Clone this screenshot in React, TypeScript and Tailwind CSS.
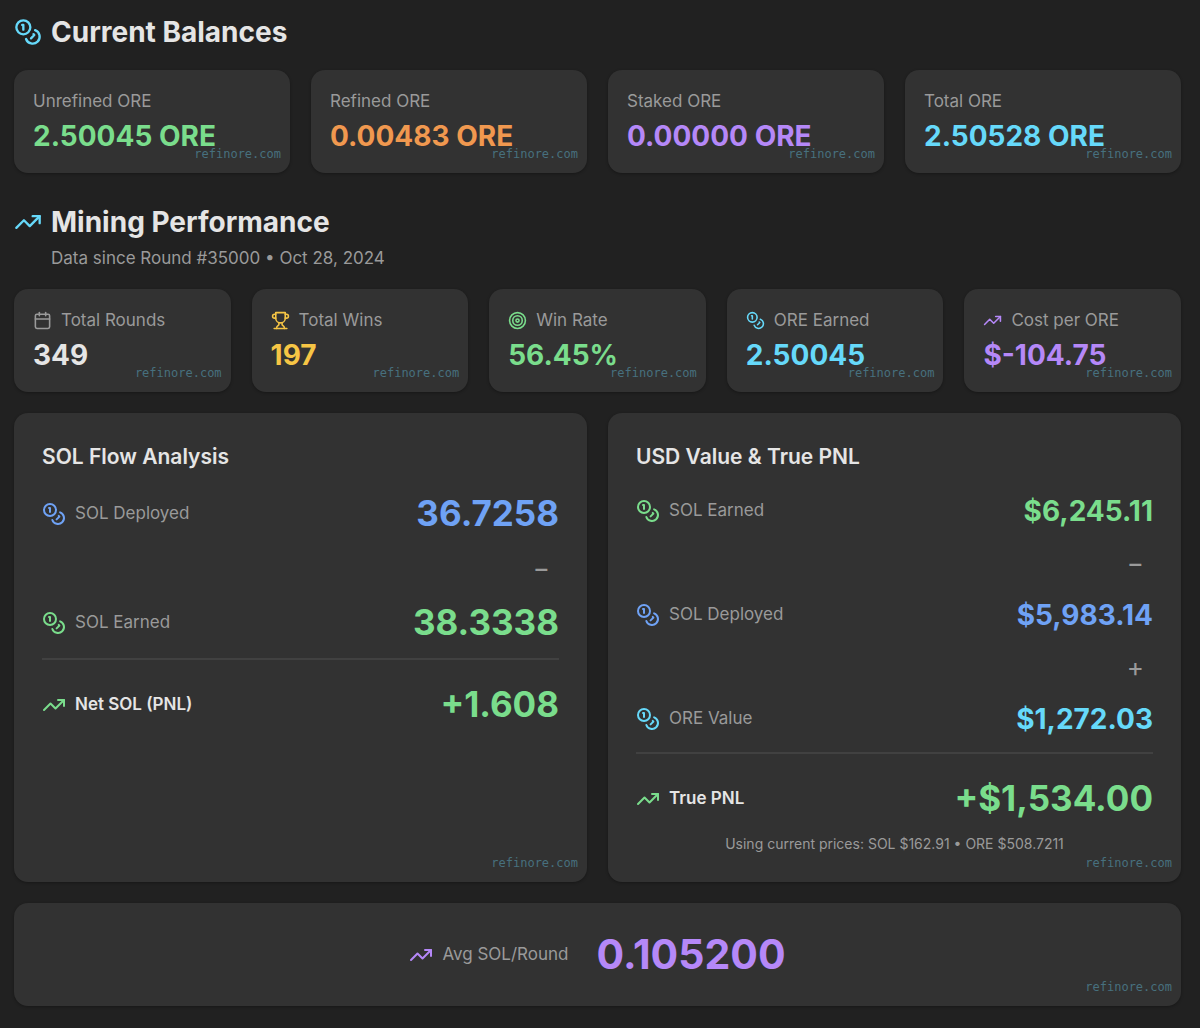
import { Calendar, Coins, Target, TrendingUp } from 'lucide-react'
import type { ComponentType, ReactNode } from 'react'

type Icon = ComponentType<{ className?: string }>

function Trophy({ className }: { className?: string }) {
  return (
    <svg viewBox="0 0 24 24" fill="none" stroke="currentColor" strokeWidth="2" strokeLinecap="round" strokeLinejoin="round" className={className}>
      <path d="M6 9H4.5a2.5 2.5 0 0 1 0-5H6" />
      <path d="M18 9h1.5a2.5 2.5 0 0 0 0-5H18" />
      <path d="M4 22h16" />
      <path d="M10 14.66V17c0 .55-.47.98-.97 1.21C7.85 18.75 7 20.24 7 22" />
      <path d="M14 14.66V17c0 .55.47.98.97 1.21C16.15 18.75 17 20.24 17 22" />
      <path d="M18 2H6v7a6 6 0 0 0 12 0V2Z" />
    </svg>
  )
}

const balances = [
  { label: 'Unrefined ORE', value: '2.50045 ORE', color: 'text-[#7add8c]' },
  { label: 'Refined ORE', value: '0.00483 ORE', color: 'text-[#f0984f]' },
  { label: 'Staked ORE', value: '0.00000 ORE', color: 'text-[#b588f8]' },
  { label: 'Total ORE', value: '2.50528 ORE', color: 'text-[#66d9fa]' },
]

const stats: { icon: Icon; label: string; value: string; color: string; iconColor: string }[] = [
  { icon: Calendar, label: 'Total Rounds', value: '349', color: 'text-[#e5e5e5]', iconColor: 'text-[#9a9a9a]' },
  { icon: Trophy, label: 'Total Wins', value: '197', color: 'text-[#f6c545]', iconColor: 'text-[#f6c545]' },
  { icon: Target, label: 'Win Rate', value: '56.45%', color: 'text-[#7add8c]', iconColor: 'text-[#7add8c]' },
  { icon: Coins, label: 'ORE Earned', value: '2.50045', color: 'text-[#66d9fa]', iconColor: 'text-[#66d9fa]' },
  { icon: TrendingUp, label: 'Cost per ORE', value: '$-104.75', color: 'text-[#b588f8]', iconColor: 'text-[#b588f8]' },
]

function Card({ className = '', children }: { className?: string; children: ReactNode }) {
  return (
    <div className={`relative rounded-[14px] bg-[#323232] shadow-[0_1px_3px_rgba(0,0,0,0.3)] ${className}`}>
      {children}
      <span className="absolute right-[9px] bottom-[9px] font-['DejaVu_Sans_Mono',monospace] text-[12px] leading-5 text-[#47707e]">
        refinore.com
      </span>
    </div>
  )
}

function FlowRow({ icon: Icon, label, value, color, large = false, total = false }: {
  icon: Icon
  label: string
  value: string
  color: string
  large?: boolean
  total?: boolean
}) {
  return (
    <div className="flex items-center justify-between">
      <div className="flex items-center gap-[9px]">
        <Icon className={`size-6 ${color}`} />
        <span className={total ? 'text-[17px] font-semibold text-[#e5e5e5]' : 'text-[17px] text-[#9a9a9a]'}>{label}</span>
      </div>
      <span className={`font-bold ${large ? 'text-[35px] leading-[41px]' : 'text-[28px] leading-9'} ${color}`}>{value}</span>
    </div>
  )
}

function Operator({ children }: { children: string }) {
  return <div className="my-4 pr-[9px] text-right text-[26px] leading-9 text-[#9a9a9a]">{children}</div>
}

export default function App() {
  return (
    <main className="min-h-screen bg-[#212121] pt-[13px] pr-[19px] pb-[22px] pl-[14px] font-[Inter,sans-serif]">
      <section>
        <h2 className="flex items-center gap-[9px] text-[28px] leading-[38px] font-bold text-[#e5e5e5]">
          <Coins className="size-7 text-[#66d9fa]" />
          Current Balances
        </h2>
        <div className="mt-[19px] grid grid-cols-4 gap-[21px]">
          {balances.map(({ label, value, color }) => (
            <Card key={label} className="p-[19px]">
              <div className="text-[17px] leading-6 text-[#9a9a9a]">{label}</div>
              <div className={`mt-[5px] text-[28px] leading-9 font-bold ${color}`}>{value}</div>
            </Card>
          ))}
        </div>
      </section>

      <section className="mt-[30px]">
        <h2 className="flex items-center gap-[9px] text-[28px] leading-[38px] font-bold text-[#e5e5e5]">
          <TrendingUp className="size-7 text-[#66d9fa]" />
          Mining Performance
        </h2>
        <p className="mt-[5px] pl-[37px] text-[17px] leading-6 text-[#9a9a9a]">Data since Round #35000 • Oct 28, 2024</p>

        <div className="mt-[19px] grid grid-cols-5 gap-[21px]">
          {stats.map(({ icon: Icon, label, value, color, iconColor }) => (
            <Card key={label} className="p-[19px]">
              <div className="flex items-center gap-[9px] text-[17px] leading-6 text-[#9a9a9a]">
                <Icon className={`size-[19px] ${iconColor}`} />
                {label}
              </div>
              <div className={`mt-[5px] text-[28px] leading-9 font-bold ${color}`}>{value}</div>
            </Card>
          ))}
        </div>

        <div className="mt-[21px] grid grid-cols-2 gap-[21px]">
          <Card className="p-7">
            <h3 className="text-[21px] leading-8 font-semibold text-[#e5e5e5]">SOL Flow Analysis</h3>
            <div className="mt-5">
              <FlowRow icon={Coins} label="SOL Deployed" value="36.7258" color="text-[#6fa2f5]" large />
              <Operator>−</Operator>
              <FlowRow icon={Coins} label="SOL Earned" value="38.3338" color="text-[#7add8c]" large />
            </div>
            <div className="mt-[15px] border-t-2 border-[#414141] pt-6">
              <FlowRow icon={TrendingUp} label="Net SOL (PNL)" value="+1.608" color="text-[#7add8c]" large total />
            </div>
          </Card>

          <Card className="p-7">
            <h3 className="text-[21px] leading-8 font-semibold text-[#e5e5e5]">USD Value &amp; True PNL</h3>
            <div className="mt-5">
              <FlowRow icon={Coins} label="SOL Earned" value="$6,245.11" color="text-[#7add8c]" />
              <Operator>−</Operator>
              <FlowRow icon={Coins} label="SOL Deployed" value="$5,983.14" color="text-[#6fa2f5]" />
              <Operator>+</Operator>
              <FlowRow icon={Coins} label="ORE Value" value="$1,272.03" color="text-[#66d9fa]" />
            </div>
            <div className="mt-[15px] border-t-2 border-[#414141] pt-6">
              <FlowRow icon={TrendingUp} label="True PNL" value="+$1,534.00" color="text-[#7add8c]" large total />
              <p className="mt-[15px] text-center text-[14px] leading-5 text-[#9a9a9a]">
                Using current prices: SOL $162.91 • ORE $508.7211
              </p>
            </div>
          </Card>
        </div>

        <Card className="mt-[21px] flex items-center justify-center gap-7 p-[26px]">
          <div className="flex items-center gap-[9px]">
            <TrendingUp className="size-6 text-[#b588f8]" />
            <span className="text-[17px] text-[#9a9a9a]">Avg SOL/Round</span>
          </div>
          <span className="text-[41px] leading-[51px] font-bold text-[#b588f8]">0.105200</span>
        </Card>
      </section>
    </main>
  )
}
